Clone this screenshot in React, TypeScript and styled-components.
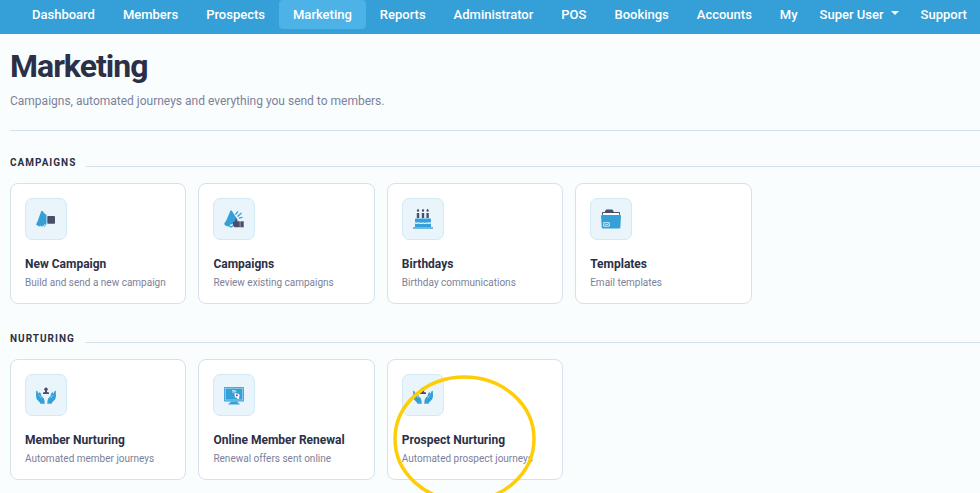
import React from "react";
import styled, { createGlobalStyle, css } from "styled-components";

const GlobalStyle = createGlobalStyle`
  *, *::before, *::after { box-sizing: border-box; }
  body {
    margin: 0;
    background: #fafdfe;
    color: #2b3047;
    font-family: Roboto, "Liberation Sans", sans-serif;
  }
`;

const Page = styled.div`
  min-height: 100vh;
  overflow: hidden;
`;

const NavBar = styled.nav`
  display: flex;
  align-items: flex-start;
  height: 34px;
  padding-left: 18px;
  background: #359fd7;
`;

const NavLink = styled.a<{ $active?: boolean; $tight?: boolean }>`
  flex: none;
  display: flex;
  align-items: center;
  height: 29px;
  padding: 0 ${(p) => (p.$tight ? 8 : 14)}px 0 14px;
  border-radius: 0 0 4px 4px;
  color: #fff;
  font-size: 13px;
  font-weight: 500;
  line-height: 16px;
  text-decoration: none;
  white-space: nowrap;
  ${(p) =>
    p.$active &&
    css`
      background: #4db2e6;
      border-radius: 4px;
    `}
`;

const UserMenu = styled.button`
  flex: none;
  display: flex;
  align-items: center;
  gap: 7px;
  height: 29px;
  padding: 0 8px 0 14px;
  border: 0;
  background: none;
  color: #fff;
  font: 500 13px/16px Roboto, "Liberation Sans", sans-serif;
  white-space: nowrap;
`;

const Caret = styled.span`
  border: 4px solid transparent;
  border-top-color: #fff;
  border-bottom: 0;
  margin-bottom: 3px;
`;

const Main = styled.main`
  padding: 12px 0 12px 10px;
`;

const Title = styled.h1`
  margin: 0;
  font-size: 32px;
  font-weight: 700;
  line-height: 40px;
  letter-spacing: -1px;
`;

const Intro = styled.p`
  margin: 0;
  padding: 7px 0 21px;
  border-bottom: 1px solid #d5e1ec;
  color: #7b819a;
  font-size: 12px;
  line-height: 16px;
`;

const Section = styled.section`
  padding-top: 24px;
  & + & {
    padding-top: 27px;
  }
`;

const SectionHead = styled.div`
  display: flex;
  align-items: center;
  gap: 10px;
  margin-bottom: 12px;
`;

const SectionTitle = styled.h2`
  margin: 0;
  font-size: 10px;
  font-weight: 700;
  line-height: 16px;
  letter-spacing: 1px;
  text-transform: uppercase;
`;

const Rule = styled.span`
  flex: 1;
  height: 1px;
  margin-top: 7px;
  background: #d5e1ec;
`;

const CardGrid = styled.div`
  display: grid;
  grid-template-columns: repeat(auto-fill, minmax(170px, 1fr));
  gap: 12px;
  padding-right: 40px;
`;

const Card = styled.a`
  position: relative;
  display: flex;
  flex-direction: column;
  align-items: flex-start;
  padding: 14px 14px 12px;
  border: 1px solid #d5e1ec;
  border-radius: 8px;
  background: #fff;
  color: inherit;
  text-decoration: none;
`;

const IconTile = styled.span`
  display: grid;
  place-items: center;
  width: 42px;
  height: 42px;
  margin-bottom: 16px;
  border: 1px solid #d3e9f5;
  border-radius: 7px;
  background: #e9f4fb;
`;

const CardTitle = styled.span`
  font-size: 12px;
  font-weight: 700;
  line-height: 16px;
  white-space: nowrap;
`;

const CardText = styled.span`
  margin-top: 3px;
  color: #7b819a;
  font-size: 10px;
  line-height: 16px;
  white-space: nowrap;
`;

const Highlight = styled.svg`
  position: absolute;
  top: 15px;
  left: 5px;
  width: 143px;
  height: 128px;
  pointer-events: none;
`;

const BLUE = "#35a0d8";
const DARK = "#4a4e69";

const Svg = ({ children }: { children: React.ReactNode }) => (
  <svg width="22" height="22" viewBox="0 0 22 22" aria-hidden="true">
    {children}
  </svg>
);

const CampaignIcon = () => (
  <Svg>
    <path d="M6.300 3h1.400L9 5l2.500 2v9l-2 3-1-1-1.500.8-1.500-1-1.500.8L1 16.500l1.500-3z" fill={BLUE} />
    <path d="M7.500 18.300q2.300.5 2.600-2.300" stroke="#fff" strokeWidth=".7" fill="none" />
    <rect x="12.300" y="8" width="7.700" height="7.700" rx=".8" fill={DARK} />
  </Svg>
);

const ThumbIcon = () => (
  <Svg>
    <path d="M7.500 2.500h1.200L15 12.500l-5 3.500-4 1v1.500l-3-.5-2-2 2.500-4z" fill={BLUE} />
    <path d="M6 16.500q.2 2.500 2.500 2.300l1.800-1.300" stroke={BLUE} strokeWidth="1.300" fill="none" />
    <path d="m12.500 6.500 2.500-3.200M14.500 8.500 18.500 5M15.800 10.200l3.700-.8" stroke={BLUE} strokeWidth="1.300" fill="none" />
    <path d="M12.500 10.200q1.600-.2 1.700 3h2.600v6h-5.300l-1.500-2v-3l2.500-1.500z" fill={DARK} />
    <rect x="17.300" y="13.300" width="3.400" height="6" fill={DARK} />
  </Svg>
);

const CakeIcon = () => (
  <Svg>
    {[6, 11, 15.6].map((x) => (
      <g key={x} fill={DARK}>
        <path d={`M${x} .8l1.200 1.500q0 1.500-1.200 1.500t-1.200-1.500z`} />
        <rect x={x - 1.2} y="5" width="2.400" height="5" />
      </g>
    ))}
    <path d="M4 10.500h14a1 1 0 0 1 1 1V14q-2 1-4 .2-2 1-4 0-2 1-4 0-2 .8-4-.2v-2.500a1 1 0 0 1 1-1z" fill={BLUE} />
    <path d="M3 15.500q2 .8 4 0 2 1 4 0 2 1 4 0 2 .8 4 0V19H3z" fill={BLUE} />
    <rect x="1" y="19.300" width="20" height="1.400" fill={BLUE} />
  </Svg>
);

const FolderIcon = () => (
  <Svg>
    <path d="M5 3 6.300 1.500h6L13.500 3v1H19a1 1 0 0 1 1 1v1.800H2V5q0-1 1-1h2z" fill={DARK} />
    <rect x="3" y="5" width="16" height="2" fill="#fff" />
    <path d="M2 7h18q1 0 1 1l-.7 11.700q0 .8-1 .8H2.800q-1 0-1-.8L1 8q0-1 1-1z" fill={BLUE} />
    <path d="M3.700 14.700h5.600v3.500H3.700z" stroke="#fff" strokeWidth=".8" fill="none" />
    <path d="M5 16.500h3" stroke="#fff" strokeWidth=".6" />
  </Svg>
);

const HandShape = () => (
  <>
    <path
      d="M1.200 6.800Q2.600 6.500 3 8.500l.4 1.800Q3.500 8.200 4.700 8.300q1.200.3 1.700 3.700l2.100 2q1.300 1.700 1.300 5.700H5.500q-.5-1.500-2.300-3Q1 15 1 12z"
      fill={BLUE}
    />
    <path d="m4.200 11.200 2.400 3" stroke="#e9f4fb" strokeWidth=".5" />
  </>
);

const HandsIcon = () => (
  <Svg>
    <HandShape />
    <g transform="matrix(-1 0 0 1 22 0)">
      <HandShape />
    </g>
    <circle cx="11" cy="5.300" r="1.700" fill={DARK} />
    <path d="M10 6h2v2l2 .4V10H8V8.400L10 8z" fill={DARK} />
  </Svg>
);

const MonitorIcon = () => (
  <Svg>
    <rect x="1" y="3" width="20" height="14.500" rx=".8" fill={BLUE} />
    <rect x="2.200" y="4.200" width="17.600" height="11.800" stroke="#bfe2f4" strokeWidth=".7" fill="none" />
    <path d="M7.500 17.500h7l.6 1.800H16.500v1.200h-11v-1.200H7z" fill={BLUE} />
    <path d="M9 6.500h2.500l.5 2M9 8h2.500M12.500 6.500 13 8" stroke="#fff" strokeWidth=".7" fill="none" />
    <path d="m11.500 9 4.500 1 .8 2-1 1 .7 1.500-2 .5-1.500-2-1 1z" fill="#fff" />
    <rect x="13" y="10.500" width="1.700" height="1.700" fill={DARK} />
  </Svg>
);

type Item = { title: string; text: string; icon: React.FC; marked?: boolean };

const sections: { name: string; items: Item[] }[] = [
  {
    name: "Campaigns",
    items: [
      { title: "New Campaign", text: "Build and send a new campaign", icon: CampaignIcon },
      { title: "Campaigns", text: "Review existing campaigns", icon: ThumbIcon },
      { title: "Birthdays", text: "Birthday communications", icon: CakeIcon },
      { title: "Templates", text: "Email templates", icon: FolderIcon },
    ],
  },
  {
    name: "Nurturing",
    items: [
      { title: "Member Nurturing", text: "Automated member journeys", icon: HandsIcon },
      { title: "Online Member Renewal", text: "Renewal offers sent online", icon: MonitorIcon },
      { title: "Prospect Nurturing", text: "Automated prospect journeys", icon: HandsIcon, marked: true },
    ],
  },
];

const links = [
  "Dashboard",
  "Members",
  "Prospects",
  "Marketing",
  "Reports",
  "Administrator",
  "POS",
  "Bookings",
  "Accounts",
];

export default function App() {
  return (
    <Page>
      <GlobalStyle />
      <NavBar>
        {links.map((name) => (
          <NavLink key={name} href="#" $active={name === "Marketing"}>
            {name}
          </NavLink>
        ))}
        <NavLink href="#" $tight>
          My
        </NavLink>
        <UserMenu type="button">
          Super User
          <Caret />
        </UserMenu>
        <NavLink href="#" $tight>
          Support
        </NavLink>
      </NavBar>
      <Main>
        <Title>Marketing</Title>
        <Intro>Campaigns, automated journeys and everything you send to members.</Intro>
        {sections.map((section) => (
          <Section key={section.name}>
            <SectionHead>
              <SectionTitle>{section.name}</SectionTitle>
              <Rule />
            </SectionHead>
            <CardGrid>
              {section.items.map(({ title, text, icon: Icon, marked }) => (
                <Card key={title} href="#">
                  <IconTile>
                    <Icon />
                  </IconTile>
                  <CardTitle>{title}</CardTitle>
                  <CardText>{text}</CardText>
                  {marked && (
                    <Highlight viewBox="0 0 143 128" aria-hidden="true">
                      <ellipse cx="71.500" cy="64" rx="69.500" ry="62" fill="none" stroke="#ffcd05" strokeWidth="3.500" />
                    </Highlight>
                  )}
                </Card>
              ))}
            </CardGrid>
          </Section>
        ))}
      </Main>
    </Page>
  );
}
